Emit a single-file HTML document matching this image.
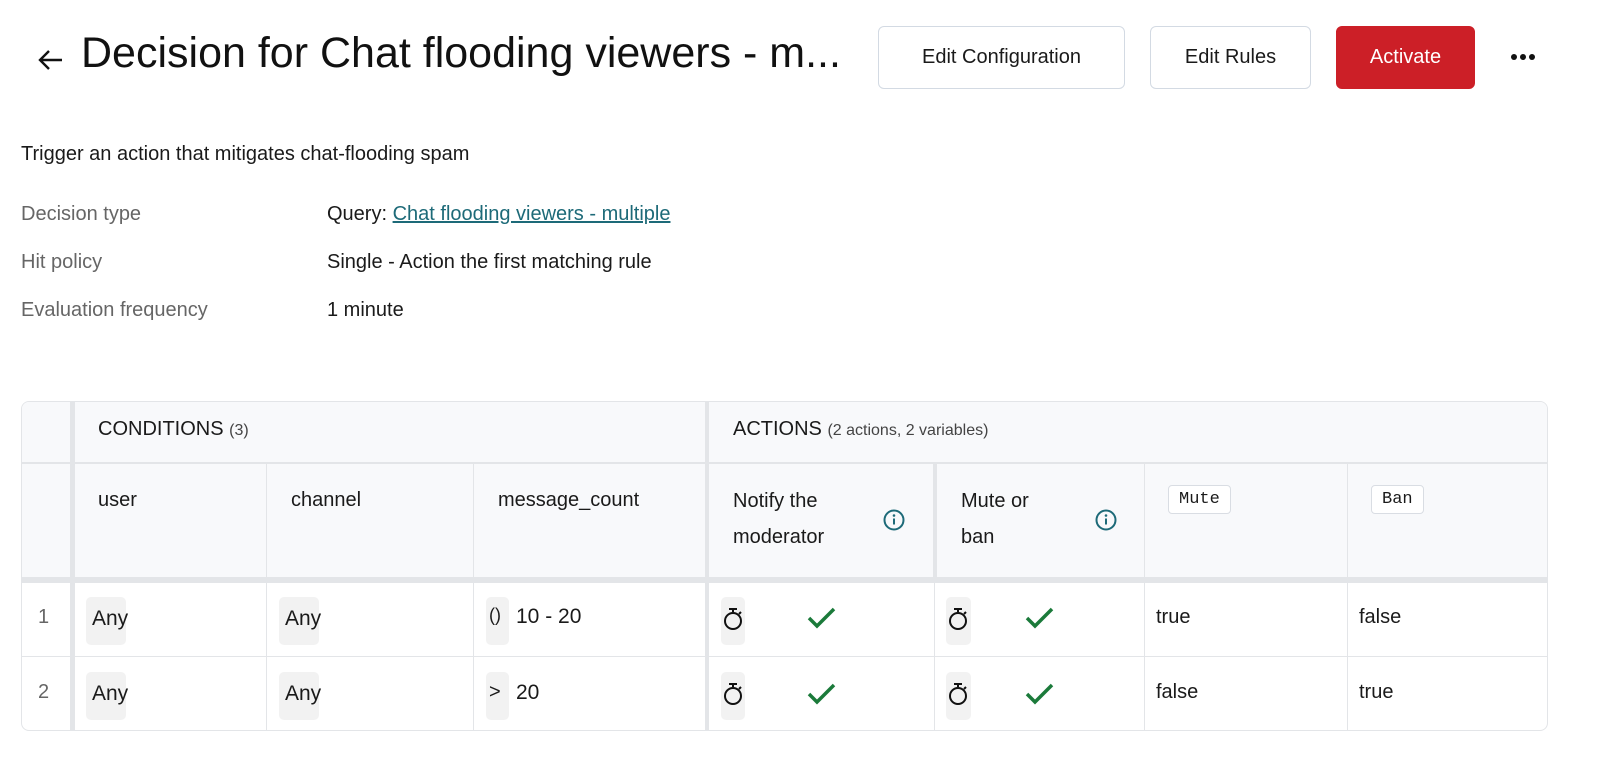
<!DOCTYPE html>
<html><head><meta charset="utf-8"><style>
*{box-sizing:border-box;margin:0;padding:0}
body{width:1600px;height:781px;background:#fff;font-family:"Liberation Sans",sans-serif;color:#1a1a1a;position:relative;overflow:hidden}
.a{position:absolute;white-space:nowrap}
.btn{position:absolute;top:26px;height:63px;border:1px solid #d3dae3;border-radius:6px;background:#fff;font-size:20px;display:flex;align-items:center;justify-content:center}
.lbl{color:#666;font-size:20px}
.val{font-size:20px}
.pill{position:absolute;background:#f2f2f2;border-radius:5px}
.code{position:absolute;border:1px solid #d9dde3;border-radius:4px;background:#fff;font-family:"Liberation Mono",monospace;font-size:17px;padding:4px 10px}
</style></head><body>
<svg class="a" style="left:36px;top:48px" width="28" height="24" viewBox="0 0 28 24"><path d="M26 12H4M13 3L4 12l9 9" stroke="#111" stroke-width="2.4" fill="none"/></svg>
<div class="a" style="left:81px;top:29px;font-size:43px;color:#111">Decision for Chat flooding viewers - m...</div>
<div class="btn" style="left:878px;width:247px">Edit Configuration</div>
<div class="btn" style="left:1150px;width:161px">Edit Rules</div>
<div class="btn" style="left:1336px;width:139px;background:#cc1f27;border-color:#cc1f27;color:#fff">Activate</div>
<svg class="a" style="left:1510px;top:53px" width="26" height="8" viewBox="0 0 26 8"><circle cx="4" cy="4" r="3" fill="#111"/><circle cx="13" cy="4" r="3" fill="#111"/><circle cx="22" cy="4" r="3" fill="#111"/></svg>

<div class="a val" style="left:21px;top:143px">Trigger an action that mitigates chat-flooding spam</div>
<div class="a lbl" style="left:21px;top:203px">Decision type</div>
<div class="a val" style="left:327px;top:203px">Query: <span style="color:#1d6a78;text-decoration:underline">Chat flooding viewers - multiple</span></div>
<div class="a lbl" style="left:21px;top:251px">Hit policy</div>
<div class="a val" style="left:327px;top:251px">Single - Action the first matching rule</div>
<div class="a lbl" style="left:21px;top:299px">Evaluation frequency</div>
<div class="a val" style="left:327px;top:299px">1 minute</div>

<div class="a" style="left:21px;top:401px;width:1527px;height:330px;border:1px solid #e3e5e8;border-radius:8px;overflow:hidden">
 <div class="a" style="left:0;top:0;width:1527px;height:176px;background:#f8f9fb"></div>
 <div class="a" style="left:0;top:60px;width:1527px;height:2px;background:#e3e5e8"></div>
 <div class="a" style="left:0;top:175px;width:1527px;height:6px;background:#e3e5e8"></div>
 <div class="a" style="left:0;top:254px;width:1527px;height:1px;background:#e3e5e8"></div>
 <div class="a" style="left:48px;top:0;width:5px;height:330px;background:#e3e5e8"></div>
 <div class="a" style="left:683px;top:0;width:4px;height:330px;background:#e3e5e8"></div>
 <div class="a" style="left:911px;top:61px;width:4px;height:115px;background:#e3e5e8"></div>
 <div class="a" style="left:244px;top:61px;width:1px;height:270px;background:#e3e5e8"></div>
 <div class="a" style="left:451px;top:61px;width:1px;height:270px;background:#e3e5e8"></div>
 <div class="a" style="left:912px;top:176px;width:1px;height:160px;background:#e3e5e8"></div>
 <div class="a" style="left:1122px;top:61px;width:1px;height:270px;background:#e3e5e8"></div>
 <div class="a" style="left:1325px;top:61px;width:1px;height:270px;background:#e3e5e8"></div>
</div>
<div class="a" style="left:98px;top:418px;font-size:20px">CONDITIONS <span style="font-size:16px;color:#444">(3)</span></div>
<div class="a" style="left:733px;top:418px;font-size:20px">ACTIONS <span style="font-size:16px;color:#444">(2 actions, 2 variables)</span></div>
<div class="a" style="left:98px;top:489px;font-size:20px">user</div>
<div class="a" style="left:291px;top:489px;font-size:20px">channel</div>
<div class="a" style="left:498px;top:489px;font-size:20px">message_count</div>
<div class="a" style="left:733px;top:483px;font-size:20px;line-height:36px;white-space:normal;width:140px">Notify the moderator</div>
<div class="a" style="left:961px;top:483px;font-size:20px;line-height:36px;white-space:normal;width:100px">Mute or ban</div>
<svg class="a" style="left:883px;top:509px" width="22" height="22" viewBox="0 0 22 22"><circle cx="11" cy="11" r="9.5" stroke="#1d6a78" stroke-width="2" fill="none"/><path d="M11 9.5v6" stroke="#1d6a78" stroke-width="2"/><circle cx="11" cy="6.5" r="1.3" fill="#1d6a78"/></svg>
<svg class="a" style="left:1095px;top:509px" width="22" height="22" viewBox="0 0 22 22"><circle cx="11" cy="11" r="9.5" stroke="#1d6a78" stroke-width="2" fill="none"/><path d="M11 9.5v6" stroke="#1d6a78" stroke-width="2"/><circle cx="11" cy="6.5" r="1.3" fill="#1d6a78"/></svg>
<div class="code" style="left:1168px;top:485px">Mute</div>
<div class="code" style="left:1371px;top:485px">Ban</div>

<div class="a" style="left:38px;top:606px;font-size:20px;color:#666">1</div>
<div class="a" style="left:38px;top:681px;font-size:20px;color:#666">2</div>
<div class="pill" style="left:86px;top:597px;width:40px;height:48px"></div>
<div class="pill" style="left:279px;top:597px;width:40px;height:48px"></div>
<div class="pill" style="left:86px;top:672px;width:40px;height:48px"></div>
<div class="pill" style="left:279px;top:672px;width:40px;height:48px"></div>
<div class="a" style="left:92px;top:607px;font-size:21px">Any</div>
<div class="a" style="left:285px;top:607px;font-size:21px">Any</div>
<div class="a" style="left:92px;top:682px;font-size:21px">Any</div>
<div class="a" style="left:285px;top:682px;font-size:21px">Any</div>
<div class="pill" style="left:486px;top:597px;width:23px;height:48px"></div>
<div class="pill" style="left:486px;top:672px;width:23px;height:48px"></div>
<div class="a" style="left:489px;top:605px;font-size:18px">()</div>
<div class="a" style="left:489px;top:681px;font-size:20px">&gt;</div>
<div class="a" style="left:516px;top:605px;font-size:21px">10 - 20</div>
<div class="a" style="left:516px;top:681px;font-size:21px">20</div>

<div class="pill" style="left:721px;top:597px;width:24px;height:48px"></div>
<div class="pill" style="left:946px;top:597px;width:25px;height:48px"></div>
<div class="pill" style="left:721px;top:672px;width:24px;height:48px"></div>
<div class="pill" style="left:946px;top:672px;width:25px;height:48px"></div>
<svg class="a" style="left:721px;top:606px" width="24" height="26" viewBox="0 0 24 26"><path d="M8 3h8M12 3v3" stroke="#111" stroke-width="2"/><circle cx="12" cy="15" r="8" stroke="#111" stroke-width="2" fill="none"/><path d="M18 8l2-2" stroke="#111" stroke-width="2"/></svg>
<svg class="a" style="left:946px;top:606px" width="24" height="26" viewBox="0 0 24 26"><path d="M8 3h8M12 3v3" stroke="#111" stroke-width="2"/><circle cx="12" cy="15" r="8" stroke="#111" stroke-width="2" fill="none"/><path d="M18 8l2-2" stroke="#111" stroke-width="2"/></svg>
<svg class="a" style="left:721px;top:681px" width="24" height="26" viewBox="0 0 24 26"><path d="M8 3h8M12 3v3" stroke="#111" stroke-width="2"/><circle cx="12" cy="15" r="8" stroke="#111" stroke-width="2" fill="none"/><path d="M18 8l2-2" stroke="#111" stroke-width="2"/></svg>
<svg class="a" style="left:946px;top:681px" width="24" height="26" viewBox="0 0 24 26"><path d="M8 3h8M12 3v3" stroke="#111" stroke-width="2"/><circle cx="12" cy="15" r="8" stroke="#111" stroke-width="2" fill="none"/><path d="M18 8l2-2" stroke="#111" stroke-width="2"/></svg>
<svg class="a" style="left:807px;top:606px" width="30" height="24" viewBox="0 0 30 24"><path d="M2 12l8 8L27 3" stroke="#1b7a3a" stroke-width="3.5" fill="none"/></svg>
<svg class="a" style="left:1025px;top:606px" width="30" height="24" viewBox="0 0 30 24"><path d="M2 12l8 8L27 3" stroke="#1b7a3a" stroke-width="3.5" fill="none"/></svg>
<svg class="a" style="left:807px;top:682px" width="30" height="24" viewBox="0 0 30 24"><path d="M2 12l8 8L27 3" stroke="#1b7a3a" stroke-width="3.5" fill="none"/></svg>
<svg class="a" style="left:1025px;top:682px" width="30" height="24" viewBox="0 0 30 24"><path d="M2 12l8 8L27 3" stroke="#1b7a3a" stroke-width="3.5" fill="none"/></svg>
<div class="a" style="left:1156px;top:606px;font-size:20px">true</div>
<div class="a" style="left:1359px;top:606px;font-size:20px">false</div>
<div class="a" style="left:1156px;top:681px;font-size:20px">false</div>
<div class="a" style="left:1359px;top:681px;font-size:20px">true</div>
</body></html>
